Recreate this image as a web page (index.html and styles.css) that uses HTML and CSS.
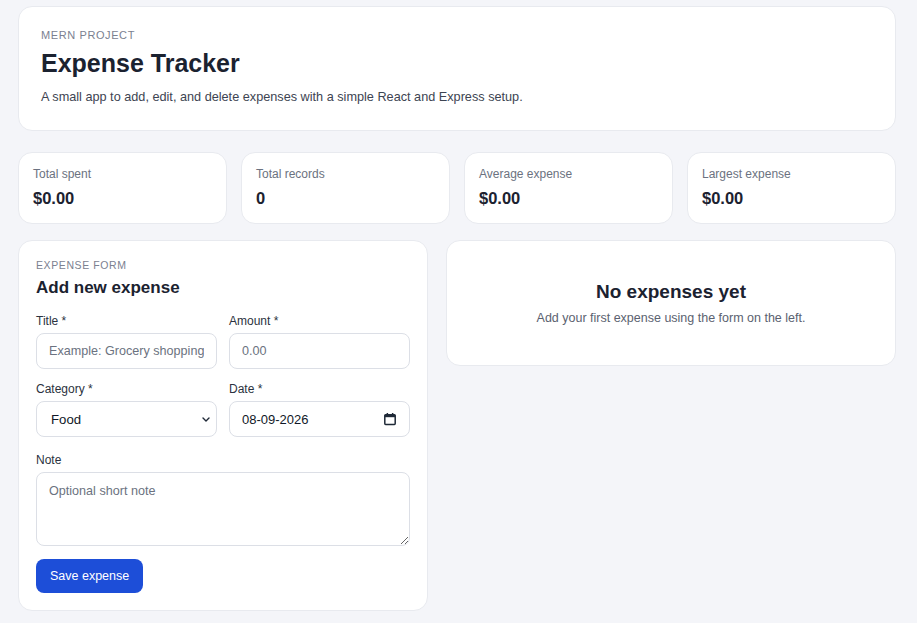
FILE: index.html
```html
<!DOCTYPE html>
<html lang="en">
<head>
<meta charset="utf-8">
<title>Expense Tracker</title>
<link rel="stylesheet" href="styles.css">
</head>
<body>
<div class="page">
  <header class="card hero">
    <p class="eyebrow">MERN PROJECT</p>
    <h1 class="hero-title">Expense Tracker</h1>
    <p class="hero-sub">A small app to add, edit, and delete expenses with a simple React and Express setup.</p>
  </header>

  <section class="stats">
    <div class="card stat"><p class="stat-label">Total spent</p><p class="stat-value">$0.00</p></div>
    <div class="card stat"><p class="stat-label">Total records</p><p class="stat-value">0</p></div>
    <div class="card stat"><p class="stat-label">Average expense</p><p class="stat-value">$0.00</p></div>
    <div class="card stat"><p class="stat-label">Largest expense</p><p class="stat-value">$0.00</p></div>
  </section>

  <section class="main">
    <form class="card form-card">
      <p class="eyebrow small">EXPENSE FORM</p>
      <h2 class="form-title">Add new expense</h2>
      <div class="grid2">
        <label class="field">
          <span class="label">Title *</span>
          <input class="input" type="text" placeholder="Example: Grocery shopping">
        </label>
        <label class="field">
          <span class="label">Amount *</span>
          <input class="input" type="text" placeholder="0.00">
        </label>
        <label class="field">
          <span class="label">Category *</span>
          <span class="select-wrap">
            <select class="input select">
              <option>Food</option>
              <option>Transport</option>
              <option>Bills</option>
            </select>
            <svg class="chev" width="8" height="5" viewBox="0 0 8 5" aria-hidden="true">
              <path d="M1 1 L4 4 L7 1" fill="none" stroke="#1f2937" stroke-width="1.4" stroke-linecap="round" stroke-linejoin="round"/>
            </svg>
          </span>
        </label>
        <label class="field">
          <span class="label">Date *</span>
          <span class="input date">
            <input class="date-text" type="text" value="08-09-2026">
            <svg class="cal" width="14" height="14" viewBox="0 0 14 14" aria-hidden="true">
              <rect x="1.8" y="2.8" width="10.4" height="9.6" rx="0.8" fill="none" stroke="#1f2937" stroke-width="1.5"/>
              <rect x="1.8" y="2.8" width="10.4" height="2.4" fill="#1f2937"/>
              <rect x="3.6" y="1" width="1.5" height="2.2" fill="#1f2937"/>
              <rect x="8.9" y="1" width="1.5" height="2.2" fill="#1f2937"/>
            </svg>
          </span>
        </label>
      </div>
      <label class="field">
        <span class="label">Note</span>
        <textarea class="input textarea" placeholder="Optional short note"></textarea>
      </label>
      <div class="actions">
        <button type="button" class="btn">Save expense</button>
      </div>
    </form>

    <div class="card empty">
      <h3 class="empty-title">No expenses yet</h3>
      <p class="empty-sub">Add your first expense using the form on the left.</p>
    </div>
  </section>
</div>
</body>
</html>
```
FILE: styles.css
```css
* { box-sizing: border-box; }
html, body { margin: 0; padding: 0; }
body {
  background: #f4f5f9;
  font-family: "Liberation Sans", Arial, sans-serif;
  color: #111827;
}
p, h1, h2, h3 { margin: 0; }
.page {
  width: 878px;
  margin-left: 18px;
  padding: 6px 0 12px;
  display: flex;
  flex-direction: column;
  gap: 21px;
}
.card {
  background: #ffffff;
  border: 1px solid #e8eaef;
  border-radius: 14px;
}
.hero {
  height: 125px;
  padding: 21px 22px 0;
}
.eyebrow {
  font-size: 11px;
  letter-spacing: 0.6px;
  color: #7b8190;
  line-height: 14px;
}
.hero-title {
  font-size: 25px;
  font-weight: 700;
  color: #1b2230;
  line-height: 30px;
  margin-top: 6px;
}
.hero-sub {
  font-size: 12.7px;
  color: #3d4452;
  line-height: 16px;
  margin-top: 11px;
}
.stats {
  display: grid;
  grid-template-columns: repeat(4, minmax(0, 1fr));
  gap: 14px;
}
.stat {
  height: 72px;
  padding: 14px 14px 0;
}
.stat-label {
  font-size: 12px;
  color: #6b7280;
  line-height: 15px;
}
.stat-value {
  font-size: 16.5px;
  font-weight: 700;
  color: #1b2230;
  line-height: 20px;
  margin-top: 6px;
}
.main {
  display: grid;
  grid-template-columns: 410px minmax(0, 1fr);
  gap: 18px;
  align-items: start;
  margin-top: -5px;
}
.form-card {
  padding: 17px 17px 17px;
  display: flex;
  flex-direction: column;
}
.eyebrow.small { font-size: 10.5px; }
.form-title {
  font-size: 17px;
  font-weight: 600;
  color: #1b2230;
  line-height: 20px;
  margin-top: 6px;
}
.grid2 {
  display: grid;
  grid-template-columns: minmax(0, 1fr) minmax(0, 1fr);
  column-gap: 12px;
  row-gap: 13px;
  margin-top: 16px;
  margin-bottom: 16px;
}
.field {
  display: flex;
  flex-direction: column;
  gap: 5px;
  min-width: 0;
}
.field.note { gap: 6px; }
.label {
  font-size: 12px;
  color: #2b3240;
  line-height: 14px;
}
.input {
  width: 100%;
  min-width: 0;
  height: 36px;
  border: 1px solid #dcdfe6;
  border-radius: 8px;
  background: #fff;
  font-family: "Liberation Sans", Arial, sans-serif;
  font-size: 12.6px;
  color: #111827;
  padding: 0 12px;
  outline: none;
}
.input::placeholder { color: #6b7280; }
.select-wrap {
  position: relative;
  display: block;
}
.select {
  appearance: none;
  -webkit-appearance: none;
  padding-left: 14px;
  font-size: 13.2px;
  color: #111827;
  display: block;
}
.chev {
  position: absolute;
  right: 7px;
  top: 16px;
  pointer-events: none;
}
.date {
  display: flex;
  align-items: center;
  justify-content: space-between;
  padding: 0 12px 0 12px;
}
.date-text {
  border: none;
  outline: none;
  padding: 0;
  width: 110px;
  font-family: "Liberation Sans", Arial, sans-serif;
  font-size: 13px;
  color: #111827;
  background: transparent;
}
.cal { flex: none; }
.textarea {
  height: 74px;
  padding: 10px 12px;
  resize: vertical;
  line-height: 16px;
}
.actions { margin-top: 13px; }
.btn {
  height: 34px;
  padding: 0 14px;
  border: none;
  border-radius: 8px;
  background: #1d4ed8;
  color: #ffffff;
  font-family: "Liberation Sans", Arial, sans-serif;
  font-size: 12.5px;
  font-weight: 500;
}
.empty {
  height: 126px;
  display: flex;
  flex-direction: column;
  align-items: center;
  padding-top: 39px;
}
.empty-title {
  font-size: 19px;
  font-weight: 700;
  color: #1b2230;
  line-height: 24px;
}
.empty-sub {
  font-size: 12.5px;
  color: #5b6270;
  line-height: 16px;
  margin-top: 6px;
}
```
